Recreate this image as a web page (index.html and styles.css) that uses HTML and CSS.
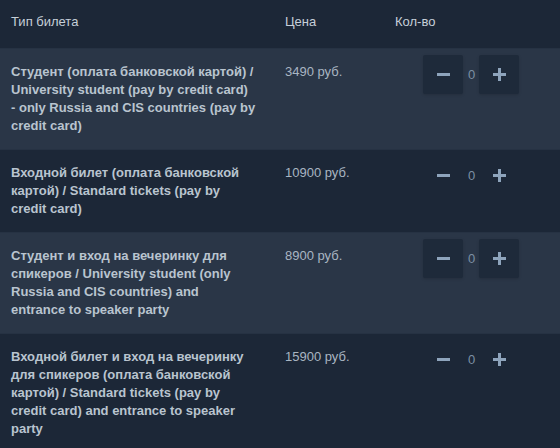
FILE: index.html
```html
<!DOCTYPE html>
<html lang="ru">
<head>
<meta charset="utf-8">
<link rel="stylesheet" href="styles.css">
</head>
<body>
<table class="tickets">
  <thead>
    <tr>
      <th class="c-name">Тип билета</th>
      <th class="c-price">Цена</th>
      <th class="c-qty">Кол-во</th>
    </tr>
  </thead>
  <tbody>
    <tr class="row light">
      <td class="name">Студент (оплата банковской картой) / University student (pay by credit card) <span class="nowrap">- only</span> Russia and CIS countries (pay by credit card)</td>
      <td class="price">3490 руб.</td>
      <td class="qty"><div class="counter"><button class="btn"><span class="minus"></span></button><span class="num">0</span><button class="btn"><span class="plus"></span></button></div></td>
    </tr>
    <tr class="row dark">
      <td class="name">Входной билет (оплата банковской картой) / Standard tickets (pay by credit card)</td>
      <td class="price">10900 руб.</td>
      <td class="qty"><div class="counter"><button class="btn"><span class="minus"></span></button><span class="num">0</span><button class="btn"><span class="plus"></span></button></div></td>
    </tr>
    <tr class="row light">
      <td class="name">Студент и вход на вечеринку для спикеров / University student (only Russia and CIS countries) and entrance to speaker party</td>
      <td class="price">8900 руб.</td>
      <td class="qty"><div class="counter"><button class="btn"><span class="minus"></span></button><span class="num">0</span><button class="btn"><span class="plus"></span></button></div></td>
    </tr>
    <tr class="row dark">
      <td class="name">Входной билет и вход на вечеринку для спикеров (оплата банковской картой) / Standard tickets (pay by credit card) and entrance to speaker party</td>
      <td class="price">15900 руб.</td>
      <td class="qty"><div class="counter"><button class="btn"><span class="minus"></span></button><span class="num">0</span><button class="btn"><span class="plus"></span></button></div></td>
    </tr>
  </tbody>
</table>
</body>
</html>
```

FILE: styles.css
```css
html, body {
  margin: 0;
  padding: 0;
  background: #1c2737;
  font-family: "Liberation Sans", Arial, sans-serif;
  font-size: 13px;
}
.tickets {
  width: 560px;
  border-collapse: collapse;
  table-layout: fixed;
}
.tickets th {
  height: 48px;
  padding: 0 10px 4px;
  text-align: left;
  font-weight: normal;
  color: #c6cfd9;
  background: #1c2737;
  vertical-align: middle;
  box-sizing: border-box;
}
.tickets th.c-name { width: 275px; padding-left: 11px; }
.tickets th.c-price { width: 110px; }
.row.light { background: #2a3647; }
.row.dark { background: #1c2737; }
.row td { vertical-align: top; }
.row td { border-top: 1px solid #263243; }
.name {
  padding: 14px 19px 14px 11px;
  font-weight: bold;
  line-height: 18px;
  color: #b9c4cf;
}
.nowrap { white-space: nowrap; }
.price {
  padding: 14px 10px;
  line-height: 18px;
  color: #a9b5c2;
}
.qty {
  padding: 6px 0 0 38px;
}
.counter {
  display: flex;
  align-items: center;
}
.btn {
  width: 40px;
  height: 39px;
  border: 0;
  padding: 0;
  border-radius: 2px;
  background: #1e2a3a;
  box-shadow: 0 1px 3px rgba(0,0,0,0.15);
  display: flex;
  align-items: center;
  justify-content: center;
}
.row.dark .btn { background: transparent; box-shadow: none; }
.num {
  padding: 0 4px 0 5px;
  color: #7c8fa3;
  font-size: 13px;
}
.minus, .plus {
  position: relative;
  width: 13px;
  height: 13px;
  display: block;
}
.minus::before, .plus::before, .plus::after {
  content: "";
  position: absolute;
  background: #8ea4bc;
}
.minus::before, .plus::before {
  left: 0; right: 0; top: 5px; height: 3px;
}
.plus::after {
  top: 0; bottom: 0; left: 5px; width: 3px;
}
```
